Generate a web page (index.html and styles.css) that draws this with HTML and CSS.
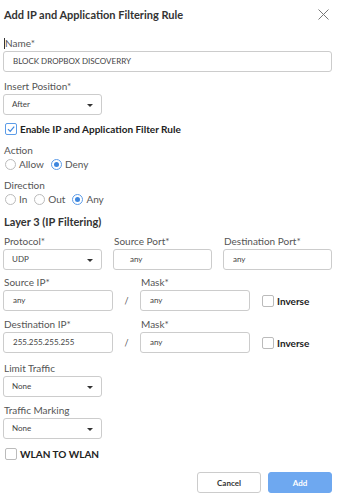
FILE: index.html
```html
<!DOCTYPE html>
<html lang="en">

<head>
    <meta charset="UTF-8">
    <title>Add IP and Application Filtering Rule</title>
    <link rel="stylesheet" href="styles.css">
</head>

<body>
    <div class="modal">
        <div class="modal-head">
            <h2>Add IP and Application Filtering Rule</h2>
            <span class="close">
                <svg width="11" height="11" viewBox="0 0 11 11">
                    <path d="M0.5 0.5 L10.5 10.5 M10.5 0.5 L0.5 10.5" stroke="#777" stroke-width="1" fill="none" />
                </svg>
            </span>
        </div>

        <div class="field first">
            <label><span class="caret-bar"></span>Name*</label>
            <div class="control">BLOCK DROPBOX DISCOVERRY</div>
        </div>

        <div class="field">
            <label>Insert Position*</label>
            <div class="control select short">After<span class="arrow"></span></div>
        </div>

        <div class="check-row enable">
            <span class="box checked">
                <svg width="10" height="10" viewBox="0 0 10 10">
                    <path d="M2 5.2 L4.2 7.4 L8.2 2.6" stroke="#3d86de" stroke-width="1.2" fill="none" />
                </svg>
            </span>
            <span class="check-text">Enable IP and Application Filter Rule</span>
        </div>

        <div class="field gap9">
            <label>Action</label>
            <div class="radios">
                <span class="radio"></span><span class="radio-text">Allow</span>
                <span class="radio on"></span><span class="radio-text">Deny</span>
            </div>
        </div>

        <div class="field gap9">
            <label>Direction</label>
            <div class="radios">
                <span class="radio"></span><span class="radio-text">In</span>
                <span class="radio"></span><span class="radio-text">Out</span>
                <span class="radio on"></span><span class="radio-text">Any</span>
            </div>
        </div>

        <h3>Layer 3 (IP Filtering)</h3>

        <div class="ports">
            <div>
                <label>Protocol*</label>
                <div class="control select">UDP<span class="arrow"></span></div>
            </div>
            <div>
                <label>Source Port*</label>
                <div class="control indent">any</div>
            </div>
            <div>
                <label>Destination Port*</label>
                <div class="control">any</div>
            </div>
        </div>

        <div class="ip-row">
            <div class="ip-col">
                <label>Source IP*</label>
                <div class="control">any</div>
            </div>
            <span class="slash">/</span>
            <div class="ip-col">
                <label>Mask*</label>
                <div class="control">any</div>
            </div>
            <div class="inverse">
                <span class="box"></span>
                <span class="check-text">Inverse</span>
            </div>
        </div>

        <div class="ip-row dest">
            <div class="ip-col">
                <label>Destination IP*</label>
                <div class="control">255.255.255.255</div>
            </div>
            <span class="slash">/</span>
            <div class="ip-col">
                <label>Mask*</label>
                <div class="control">any</div>
            </div>
            <div class="inverse">
                <span class="box"></span>
                <span class="check-text">Inverse</span>
            </div>
        </div>

        <div class="field gap9">
            <label>Limit Traffic</label>
            <div class="control select short">None<span class="arrow"></span></div>
        </div>

        <div class="field marking">
            <label>Traffic Marking</label>
            <div class="control select short">None<span class="arrow"></span></div>
        </div>

        <div class="check-row wlan">
            <span class="box"></span>
            <span class="check-text">WLAN TO WLAN</span>
        </div>

        <div class="actions">
            <button class="btn">Cancel</button>
            <button class="btn primary">Add</button>
        </div>
    </div>
</body>

</html>
```

FILE: styles.css
```css
* {
    box-sizing: border-box;
}

body {
    margin: 0;
    background: #fff;
    font-family: Lato, 'Open Sans', sans-serif;
    color: #333;
}

.modal {
    width: 339px;
    padding: 0 7px 0 3px;
}

.modal-head {
    height: 29px;
    display: flex;
    align-items: center;
    justify-content: space-between;
    padding-left: 1px;
}

h2 {
    margin: 0;
    font-size: 11px;
    font-weight: 700;
    color: #333;
}

.close {
    display: flex;
    margin-right: 3px;
}

label {
    display: block;
    font-size: 10px;
    line-height: 12px;
    color: #555;
    padding-left: 1px;
    margin-bottom: 2px;
    white-space: nowrap;
}

.caret-bar {
    display: inline-block;
    width: 1px;
    height: 11px;
    background: #333;
    vertical-align: -2px;
}

.field {
    margin-top: 8px;
}

.field.gap9 {
    margin-top: 9px;
}

.field.marking {
    margin-top: 7px;
}

.control {
    position: relative;
    height: 21px;
    border: 1px solid #ccc;
    border-radius: 3px;
    padding: 0 9px;
    font-size: 8px;
    line-height: 19px;
    color: #444;
    background: #fff;
    white-space: nowrap;
}

.control.indent {
    padding-left: 16px;
}

.select {
    padding-left: 8px;
}

.short {
    width: 99px;
}

.arrow {
    position: absolute;
    right: 8px;
    top: 9px;
    border-left: 3px solid transparent;
    border-right: 3px solid transparent;
    border-top: 3px solid #333;
}

.check-row {
    display: flex;
    align-items: center;
    height: 12px;
    padding-left: 2px;
}

.check-row.enable {
    margin-top: 8px;
}

.check-row.wlan {
    margin-top: 9px;
}

.box {
    width: 12px;
    height: 12px;
    border: 1px solid #bbb;
    border-radius: 2px;
    display: flex;
    align-items: center;
    justify-content: center;
    flex-shrink: 0;
}

.box.checked {
    border-color: #5c9ce8;
}

.check-text {
    margin-left: 3px;
    font-size: 10px;
    font-weight: 700;
    color: #222;
    white-space: nowrap;
}

.radios {
    display: flex;
    align-items: center;
    height: 12px;
    padding-left: 2px;
}

.radio {
    width: 11px;
    height: 11px;
    border: 1px solid #bbb;
    border-radius: 50%;
    display: flex;
    align-items: center;
    justify-content: center;
}

.radio.on {
    border-color: #5c9ce8;
}

.radio.on::after {
    content: "";
    width: 5px;
    height: 5px;
    border-radius: 50%;
    background: #3d86de;
}

.radio-text {
    margin: 0 7px 0 3px;
    font-size: 10px;
    color: #555;
}

h3 {
    margin: 10px 0 0;
    padding-left: 1px;
    font-size: 11px;
    line-height: 14px;
    font-weight: 700;
    color: #333;
}

.ports {
    display: grid;
    grid-template-columns: 99px 99px 109px;
    column-gap: 11px;
    margin-top: 6px;
}

.ip-row {
    display: flex;
    align-items: flex-end;
    margin-top: 6px;
}

.ip-row.dest {
    margin-top: 7px;
}

.ip-col {
    width: 110px;
}

.slash {
    width: 27px;
    height: 21px;
    line-height: 21px;
    text-align: center;
    font-size: 9px;
    color: #555;
}

.inverse {
    display: flex;
    align-items: center;
    height: 21px;
    margin-left: 12px;
}

.actions {
    display: flex;
    justify-content: flex-end;
    gap: 7px;
    margin-top: 12px;
}

.btn {
    width: 64px;
    height: 21px;
    border: 1px solid #ccc;
    border-radius: 3px;
    background: #fff;
    font-family: Lato, 'Open Sans', sans-serif;
    font-size: 8px;
    font-weight: 700;
    color: #333;
}

.btn.primary {
    border-color: #6ea8f0;
    background: #6ea8f0;
    color: #fff;
}
```
